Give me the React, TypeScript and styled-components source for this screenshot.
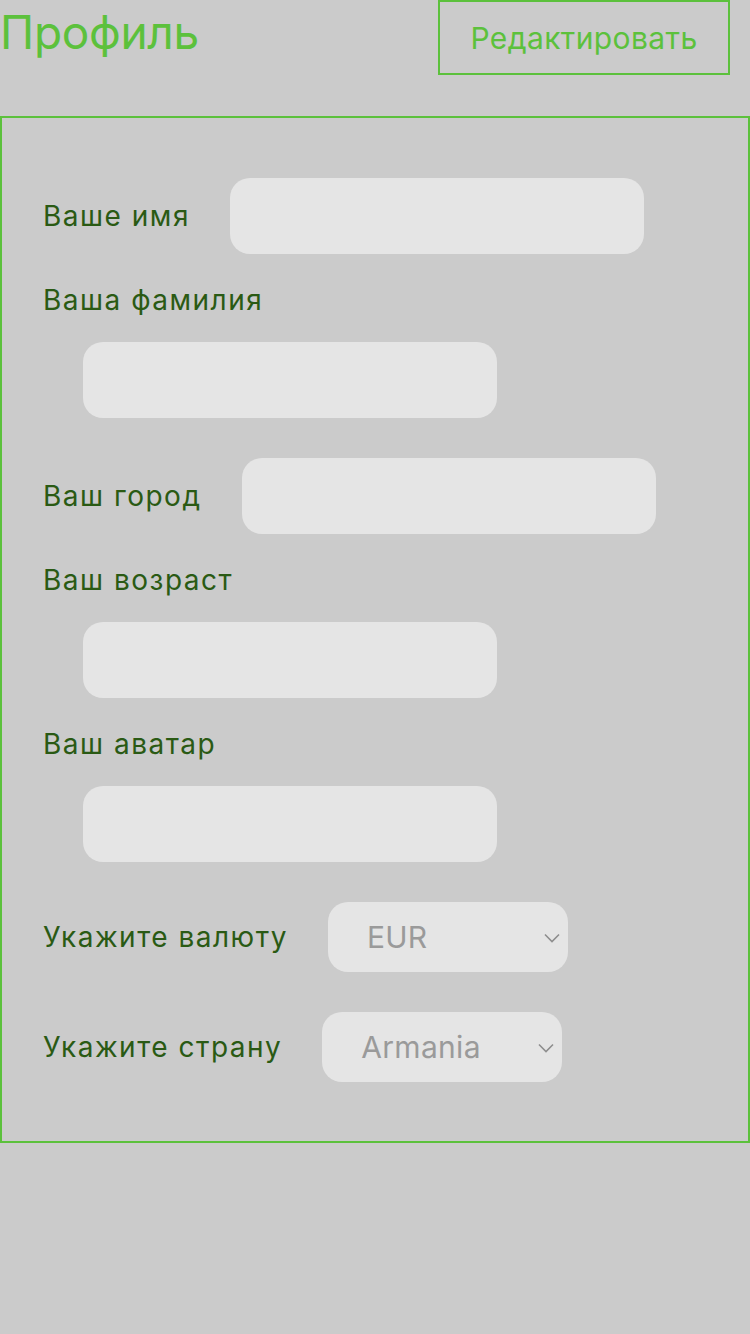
import React from "react";
import styled, { createGlobalStyle } from "styled-components";

const GlobalStyle = createGlobalStyle`
  html, body {
    margin: 0;
    padding: 0;
    background: #cbcbcb;
    font-family: Inter, "Noto Sans", Arial, sans-serif;
  }
  * { box-sizing: border-box; }
`;

const Page = styled.div`
  width: 750px;
  min-height: 1334px;
  background: #cbcbcb;
`;

const Header = styled.header`
  display: flex;
  justify-content: space-between;
  align-items: flex-start;
  padding-right: 20px;
  height: 116px;
`;

const Title = styled.h1`
  margin: 9px 0 0 0;
  font-size: 46px;
  line-height: 1;
  font-weight: 400;
  color: #5cc13c;
  letter-spacing: -0.3px;
`;

const EditButton = styled.button`
  width: 292px;
  height: 75px;
  border: 2px solid #5cc13c;
  background: transparent;
  color: #5cc13c;
  font-family: inherit;
  font-size: 30px;
  letter-spacing: 0.4px;
  padding: 0;
  cursor: pointer;
`;

const FormBox = styled.form`
  display: flex;
  flex-direction: column;
  gap: 26px;
  border: 2px solid #5cc13c;
  padding: 46px 41px 59px 41px;
`;

const Field = styled.div<{ $stacked?: boolean }>`
  display: flex;
  flex-direction: ${(p) => (p.$stacked ? "column" : "row")};
  align-items: ${(p) => (p.$stacked ? "flex-start" : "center")};
  margin-top: ${(p) => (p.$stacked ? "0" : "14px")};
`;

const Label = styled.label`
  font-size: 28px;
  line-height: 40px;
  letter-spacing: 1.5px;
  color: #2a5a14;
  white-space: nowrap;
`;

const TextInput = styled.input<{ $stacked?: boolean }>`
  width: 414px;
  height: 76px;
  margin: ${(p) => (p.$stacked ? "22px 0 0 40px" : "0 0 0 40px")};
  border: none;
  border-radius: 20px;
  background: #e5e5e5;
  font-family: inherit;
  font-size: 28px;
  padding: 0 20px;
  outline: none;
`;

const SelectWrap = styled.div`
  position: relative;
  margin-left: 40px;
  width: 240px;
  height: 70px;
`;

const Select = styled.select`
  appearance: none;
  -webkit-appearance: none;
  width: 100%;
  height: 100%;
  border: none;
  border-radius: 20px;
  background: #e5e5e5;
  color: #9a9a9a;
  font-family: inherit;
  font-size: 30px;
  letter-spacing: 0.3px;
  padding: 0 0 0 39px;
  outline: none;
`;

const Chevron = styled.svg`
  position: absolute;
  right: 7px;
  top: 31px;
  pointer-events: none;
`;

const ChevronIcon = () => (
  <Chevron width="18" height="10" viewBox="0 0 18 10">
    <path d="M2 1.5 L9 8.5 L16 1.5" fill="none" stroke="#8e8e8e" strokeWidth="1.6" />
  </Chevron>
);

export default function App() {
  return (
    <Page>
      <GlobalStyle />
      <Header>
        <Title>Профиль</Title>
        <EditButton type="button">Редактировать</EditButton>
      </Header>
      <FormBox onSubmit={(e) => e.preventDefault()}>
        <Field>
          <Label>Ваше имя</Label>
          <TextInput type="text" />
        </Field>
        <Field $stacked>
          <Label>Ваша фамилия</Label>
          <TextInput $stacked type="text" />
        </Field>
        <Field>
          <Label>Ваш город</Label>
          <TextInput type="text" />
        </Field>
        <Field $stacked>
          <Label>Ваш возраст</Label>
          <TextInput $stacked type="text" />
        </Field>
        <Field $stacked>
          <Label>Ваш аватар</Label>
          <TextInput $stacked type="text" />
        </Field>
        <Field>
          <Label>Укажите валюту</Label>
          <SelectWrap>
            <Select defaultValue="EUR">
              <option value="EUR">EUR</option>
              <option value="USD">USD</option>
              <option value="RUB">RUB</option>
            </Select>
            <ChevronIcon />
          </SelectWrap>
        </Field>
        <Field>
          <Label>Укажите страну</Label>
          <SelectWrap>
            <Select defaultValue="Armania">
              <option value="Armania">Armania</option>
              <option value="Russia">Russia</option>
            </Select>
            <ChevronIcon />
          </SelectWrap>
        </Field>
      </FormBox>
    </Page>
  );
}
